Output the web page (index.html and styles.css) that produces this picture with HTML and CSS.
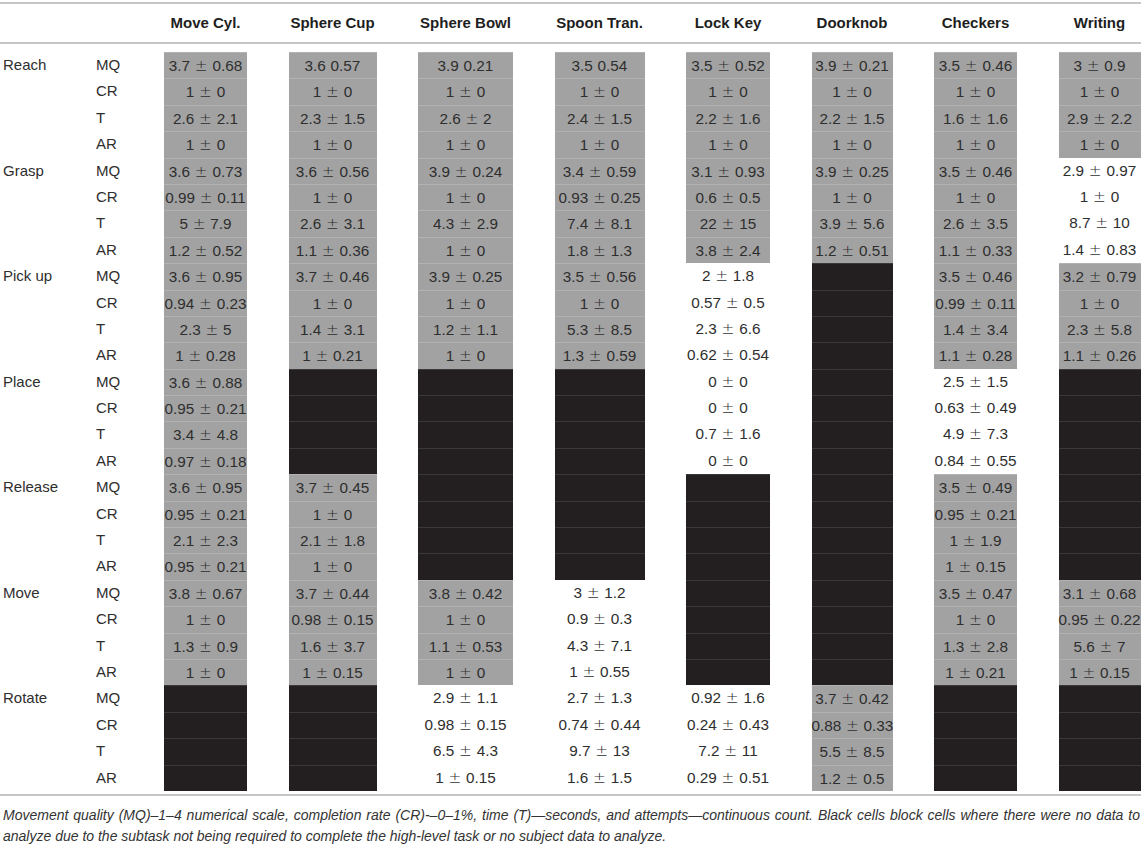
FILE: index.html
```html
<!DOCTYPE html>
<html lang="en">

<head>
    <meta charset="UTF-8">
    <meta name="viewport" content="width=device-width, initial-scale=1.0">
    <title>Subtask results</title>

    <link rel="stylesheet" href="styles.css">
</head>

<body>
    <div class="table">
        <div class="grid head">
            <div></div>
            <div></div>
            <div>Move Cyl.</div>
            <div>Sphere Cup</div>
            <div>Sphere Bowl</div>
            <div>Spoon Tran.</div>
            <div>Lock Key</div>
            <div>Doorknob</div>
            <div>Checkers</div>
            <div>Writing</div>
        </div>

        <div class="grid body">
            <!-- Reach -->
            <div class="task">Reach</div><div class="sub">MQ</div>
            <div class="g">3.7 <span class="pm">±</span> 0.68</div><div class="g">3.6 0.57</div><div class="g">3.9 0.21</div><div class="g">3.5 0.54</div><div class="g">3.5 <span class="pm">±</span> 0.52</div><div class="g">3.9 <span class="pm">±</span> 0.21</div><div class="g">3.5 <span class="pm">±</span> 0.46</div><div class="g">3 <span class="pm">±</span> 0.9</div>
            <div class="task"></div><div class="sub">CR</div>
            <div class="g">1 <span class="pm">±</span> 0</div><div class="g">1 <span class="pm">±</span> 0</div><div class="g">1 <span class="pm">±</span> 0</div><div class="g">1 <span class="pm">±</span> 0</div><div class="g">1 <span class="pm">±</span> 0</div><div class="g">1 <span class="pm">±</span> 0</div><div class="g">1 <span class="pm">±</span> 0</div><div class="g">1 <span class="pm">±</span> 0</div>
            <div class="task"></div><div class="sub">T</div>
            <div class="g">2.6 <span class="pm">±</span> 2.1</div><div class="g">2.3 <span class="pm">±</span> 1.5</div><div class="g">2.6 <span class="pm">±</span> 2</div><div class="g">2.4 <span class="pm">±</span> 1.5</div><div class="g">2.2 <span class="pm">±</span> 1.6</div><div class="g">2.2 <span class="pm">±</span> 1.5</div><div class="g">1.6 <span class="pm">±</span> 1.6</div><div class="g">2.9 <span class="pm">±</span> 2.2</div>
            <div class="task"></div><div class="sub">AR</div>
            <div class="g">1 <span class="pm">±</span> 0</div><div class="g">1 <span class="pm">±</span> 0</div><div class="g">1 <span class="pm">±</span> 0</div><div class="g">1 <span class="pm">±</span> 0</div><div class="g">1 <span class="pm">±</span> 0</div><div class="g">1 <span class="pm">±</span> 0</div><div class="g">1 <span class="pm">±</span> 0</div><div class="g">1 <span class="pm">±</span> 0</div>

            <!-- Grasp -->
            <div class="task">Grasp</div><div class="sub">MQ</div>
            <div class="g">3.6 <span class="pm">±</span> 0.73</div><div class="g">3.6 <span class="pm">±</span> 0.56</div><div class="g">3.9 <span class="pm">±</span> 0.24</div><div class="g">3.4 <span class="pm">±</span> 0.59</div><div class="g">3.1 <span class="pm">±</span> 0.93</div><div class="g">3.9 <span class="pm">±</span> 0.25</div><div class="g">3.5 <span class="pm">±</span> 0.46</div><div class="w">2.9 <span class="pm">±</span> 0.97</div>
            <div class="task"></div><div class="sub">CR</div>
            <div class="g">0.99 <span class="pm">±</span> 0.11</div><div class="g">1 <span class="pm">±</span> 0</div><div class="g">1 <span class="pm">±</span> 0</div><div class="g">0.93 <span class="pm">±</span> 0.25</div><div class="g">0.6 <span class="pm">±</span> 0.5</div><div class="g">1 <span class="pm">±</span> 0</div><div class="g">1 <span class="pm">±</span> 0</div><div class="w">1 <span class="pm">±</span> 0</div>
            <div class="task"></div><div class="sub">T</div>
            <div class="g">5 <span class="pm">±</span> 7.9</div><div class="g">2.6 <span class="pm">±</span> 3.1</div><div class="g">4.3 <span class="pm">±</span> 2.9</div><div class="g">7.4 <span class="pm">±</span> 8.1</div><div class="g">22 <span class="pm">±</span> 15</div><div class="g">3.9 <span class="pm">±</span> 5.6</div><div class="g">2.6 <span class="pm">±</span> 3.5</div><div class="w">8.7 <span class="pm">±</span> 10</div>
            <div class="task"></div><div class="sub">AR</div>
            <div class="g">1.2 <span class="pm">±</span> 0.52</div><div class="g">1.1 <span class="pm">±</span> 0.36</div><div class="g">1 <span class="pm">±</span> 0</div><div class="g">1.8 <span class="pm">±</span> 1.3</div><div class="g">3.8 <span class="pm">±</span> 2.4</div><div class="g">1.2 <span class="pm">±</span> 0.51</div><div class="g">1.1 <span class="pm">±</span> 0.33</div><div class="w">1.4 <span class="pm">±</span> 0.83</div>

            <!-- Pick up -->
            <div class="task">Pick up</div><div class="sub">MQ</div>
            <div class="g">3.6 <span class="pm">±</span> 0.95</div><div class="g">3.7 <span class="pm">±</span> 0.46</div><div class="g">3.9 <span class="pm">±</span> 0.25</div><div class="g">3.5 <span class="pm">±</span> 0.56</div><div class="w">2 <span class="pm">±</span> 1.8</div><div class="b"></div><div class="g">3.5 <span class="pm">±</span> 0.46</div><div class="g">3.2 <span class="pm">±</span> 0.79</div>
            <div class="task"></div><div class="sub">CR</div>
            <div class="g">0.94 <span class="pm">±</span> 0.23</div><div class="g">1 <span class="pm">±</span> 0</div><div class="g">1 <span class="pm">±</span> 0</div><div class="g">1 <span class="pm">±</span> 0</div><div class="w">0.57 <span class="pm">±</span> 0.5</div><div class="b"></div><div class="g">0.99 <span class="pm">±</span> 0.11</div><div class="g">1 <span class="pm">±</span> 0</div>
            <div class="task"></div><div class="sub">T</div>
            <div class="g">2.3 <span class="pm">±</span> 5</div><div class="g">1.4 <span class="pm">±</span> 3.1</div><div class="g">1.2 <span class="pm">±</span> 1.1</div><div class="g">5.3 <span class="pm">±</span> 8.5</div><div class="w">2.3 <span class="pm">±</span> 6.6</div><div class="b"></div><div class="g">1.4 <span class="pm">±</span> 3.4</div><div class="g">2.3 <span class="pm">±</span> 5.8</div>
            <div class="task"></div><div class="sub">AR</div>
            <div class="g">1 <span class="pm">±</span> 0.28</div><div class="g">1 <span class="pm">±</span> 0.21</div><div class="g">1 <span class="pm">±</span> 0</div><div class="g">1.3 <span class="pm">±</span> 0.59</div><div class="w">0.62 <span class="pm">±</span> 0.54</div><div class="b"></div><div class="g">1.1 <span class="pm">±</span> 0.28</div><div class="g">1.1 <span class="pm">±</span> 0.26</div>

            <!-- Place -->
            <div class="task">Place</div><div class="sub">MQ</div>
            <div class="g">3.6 <span class="pm">±</span> 0.88</div><div class="b"></div><div class="b"></div><div class="b"></div><div class="w">0 <span class="pm">±</span> 0</div><div class="b"></div><div class="w">2.5 <span class="pm">±</span> 1.5</div><div class="b"></div>
            <div class="task"></div><div class="sub">CR</div>
            <div class="g">0.95 <span class="pm">±</span> 0.21</div><div class="b"></div><div class="b"></div><div class="b"></div><div class="w">0 <span class="pm">±</span> 0</div><div class="b"></div><div class="w">0.63 <span class="pm">±</span> 0.49</div><div class="b"></div>
            <div class="task"></div><div class="sub">T</div>
            <div class="g">3.4 <span class="pm">±</span> 4.8</div><div class="b"></div><div class="b"></div><div class="b"></div><div class="w">0.7 <span class="pm">±</span> 1.6</div><div class="b"></div><div class="w">4.9 <span class="pm">±</span> 7.3</div><div class="b"></div>
            <div class="task"></div><div class="sub">AR</div>
            <div class="g">0.97 <span class="pm">±</span> 0.18</div><div class="b"></div><div class="b"></div><div class="b"></div><div class="w">0 <span class="pm">±</span> 0</div><div class="b"></div><div class="w">0.84 <span class="pm">±</span> 0.55</div><div class="b"></div>

            <!-- Release -->
            <div class="task">Release</div><div class="sub">MQ</div>
            <div class="g">3.6 <span class="pm">±</span> 0.95</div><div class="g">3.7 <span class="pm">±</span> 0.45</div><div class="b"></div><div class="b"></div><div class="b"></div><div class="b"></div><div class="g">3.5 <span class="pm">±</span> 0.49</div><div class="b"></div>
            <div class="task"></div><div class="sub">CR</div>
            <div class="g">0.95 <span class="pm">±</span> 0.21</div><div class="g">1 <span class="pm">±</span> 0</div><div class="b"></div><div class="b"></div><div class="b"></div><div class="b"></div><div class="g">0.95 <span class="pm">±</span> 0.21</div><div class="b"></div>
            <div class="task"></div><div class="sub">T</div>
            <div class="g">2.1 <span class="pm">±</span> 2.3</div><div class="g">2.1 <span class="pm">±</span> 1.8</div><div class="b"></div><div class="b"></div><div class="b"></div><div class="b"></div><div class="g">1 <span class="pm">±</span> 1.9</div><div class="b"></div>
            <div class="task"></div><div class="sub">AR</div>
            <div class="g">0.95 <span class="pm">±</span> 0.21</div><div class="g">1 <span class="pm">±</span> 0</div><div class="b"></div><div class="b"></div><div class="b"></div><div class="b"></div><div class="g">1 <span class="pm">±</span> 0.15</div><div class="b"></div>

            <!-- Move -->
            <div class="task">Move</div><div class="sub">MQ</div>
            <div class="g">3.8 <span class="pm">±</span> 0.67</div><div class="g">3.7 <span class="pm">±</span> 0.44</div><div class="g">3.8 <span class="pm">±</span> 0.42</div><div class="w">3 <span class="pm">±</span> 1.2</div><div class="b"></div><div class="b"></div><div class="g">3.5 <span class="pm">±</span> 0.47</div><div class="g">3.1 <span class="pm">±</span> 0.68</div>
            <div class="task"></div><div class="sub">CR</div>
            <div class="g">1 <span class="pm">±</span> 0</div><div class="g">0.98 <span class="pm">±</span> 0.15</div><div class="g">1 <span class="pm">±</span> 0</div><div class="w">0.9 <span class="pm">±</span> 0.3</div><div class="b"></div><div class="b"></div><div class="g">1 <span class="pm">±</span> 0</div><div class="g">0.95 <span class="pm">±</span> 0.22</div>
            <div class="task"></div><div class="sub">T</div>
            <div class="g">1.3 <span class="pm">±</span> 0.9</div><div class="g">1.6 <span class="pm">±</span> 3.7</div><div class="g">1.1 <span class="pm">±</span> 0.53</div><div class="w">4.3 <span class="pm">±</span> 7.1</div><div class="b"></div><div class="b"></div><div class="g">1.3 <span class="pm">±</span> 2.8</div><div class="g">5.6 <span class="pm">±</span> 7</div>
            <div class="task"></div><div class="sub">AR</div>
            <div class="g">1 <span class="pm">±</span> 0</div><div class="g">1 <span class="pm">±</span> 0.15</div><div class="g">1 <span class="pm">±</span> 0</div><div class="w">1 <span class="pm">±</span> 0.55</div><div class="b"></div><div class="b"></div><div class="g">1 <span class="pm">±</span> 0.21</div><div class="g">1 <span class="pm">±</span> 0.15</div>

            <!-- Rotate -->
            <div class="task">Rotate</div><div class="sub">MQ</div>
            <div class="b"></div><div class="b"></div><div class="w">2.9 <span class="pm">±</span> 1.1</div><div class="w">2.7 <span class="pm">±</span> 1.3</div><div class="w">0.92 <span class="pm">±</span> 1.6</div><div class="g">3.7 <span class="pm">±</span> 0.42</div><div class="b"></div><div class="b"></div>
            <div class="task"></div><div class="sub">CR</div>
            <div class="b"></div><div class="b"></div><div class="w">0.98 <span class="pm">±</span> 0.15</div><div class="w">0.74 <span class="pm">±</span> 0.44</div><div class="w">0.24 <span class="pm">±</span> 0.43</div><div class="g">0.88 <span class="pm">±</span> 0.33</div><div class="b"></div><div class="b"></div>
            <div class="task"></div><div class="sub">T</div>
            <div class="b"></div><div class="b"></div><div class="w">6.5 <span class="pm">±</span> 4.3</div><div class="w">9.7 <span class="pm">±</span> 13</div><div class="w">7.2 <span class="pm">±</span> 11</div><div class="g">5.5 <span class="pm">±</span> 8.5</div><div class="b"></div><div class="b"></div>
            <div class="task"></div><div class="sub">AR</div>
            <div class="b"></div><div class="b"></div><div class="w">1 <span class="pm">±</span> 0.15</div><div class="w">1.6 <span class="pm">±</span> 1.5</div><div class="w">0.29 <span class="pm">±</span> 0.51</div><div class="g">1.2 <span class="pm">±</span> 0.5</div><div class="b"></div><div class="b"></div>
        </div>
    </div>

    <p class="caption">Movement quality (MQ)–1–4 numerical scale, completion rate (CR)-–0–1%, time (T)—seconds, and attempts—continuous count. Black cells block cells where there were no data to analyze due to the subtask not being required to complete the high-level task or no subject data to analyze.</p>
</body>

</html>
```

FILE: styles.css
```css
body {
    margin: 0;
    font-family: "Liberation Sans", Arial, sans-serif;
    color: #2e2e2e;
    background: #fff;
}

.table {
    margin: 2px 2px 0 0;
    border-top: 2px solid #c6c6c6;
    border-bottom: 2px solid #c6c6c6;
}

.grid {
    display: grid;
    grid-template-columns: 51.5px 26.5px 83px 88px 95px 90px 84px 81px 83px 82px;
    column-gap: 41.5px;
    padding-left: 3px;
}

.head {
    height: 37px;
    padding-bottom: 1px;
    align-items: center;
    border-bottom: 2px solid #c6c6c6;
    font-size: 15px;
    font-weight: bold;
    color: #1e1e1e;
    text-align: center;
}

.body {
    grid-auto-rows: 26.4px;
    padding-top: 8px;
    padding-bottom: 3px;
    font-size: 15.3px;
    line-height: 26.4px;
}

.task,
.sub {
    font-size: 15px;
    white-space: nowrap;
    text-align: left;
}

.g,
.w,
.b {
    text-align: center;
    white-space: nowrap;
    word-spacing: 0.5px;
}

.pm {
    font-family: "DejaVu Sans", sans-serif;
    font-weight: 300;
}

.g {
    background: #a2a2a2;
    border-top: 1px solid #b2b2b2;
    line-height: 25.4px;
}

.b {
    background: #231f20;
    border-top: 1px solid #3b3839;
}

.caption {
    margin: 9px 3px 0 3px;
    font-size: 14px;
    font-style: italic;
    line-height: 21px;
    text-align: justify;
    color: #333;
}
```
